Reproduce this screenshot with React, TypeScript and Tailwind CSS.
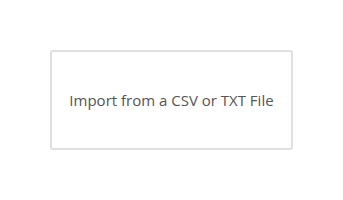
export default function App() {
  return (
    <div className="w-[343px] h-[200px] bg-white pt-[50px] pl-[50px]">
      <div className="w-[243px] h-[100px] border-2 border-[#e0e0e0] rounded-[3px] flex items-center justify-center">
        <span className="text-[15px] text-[#555] font-['Open_Sans',sans-serif]">Import from a CSV or TXT File</span>
      </div>
    </div>
  );
}
